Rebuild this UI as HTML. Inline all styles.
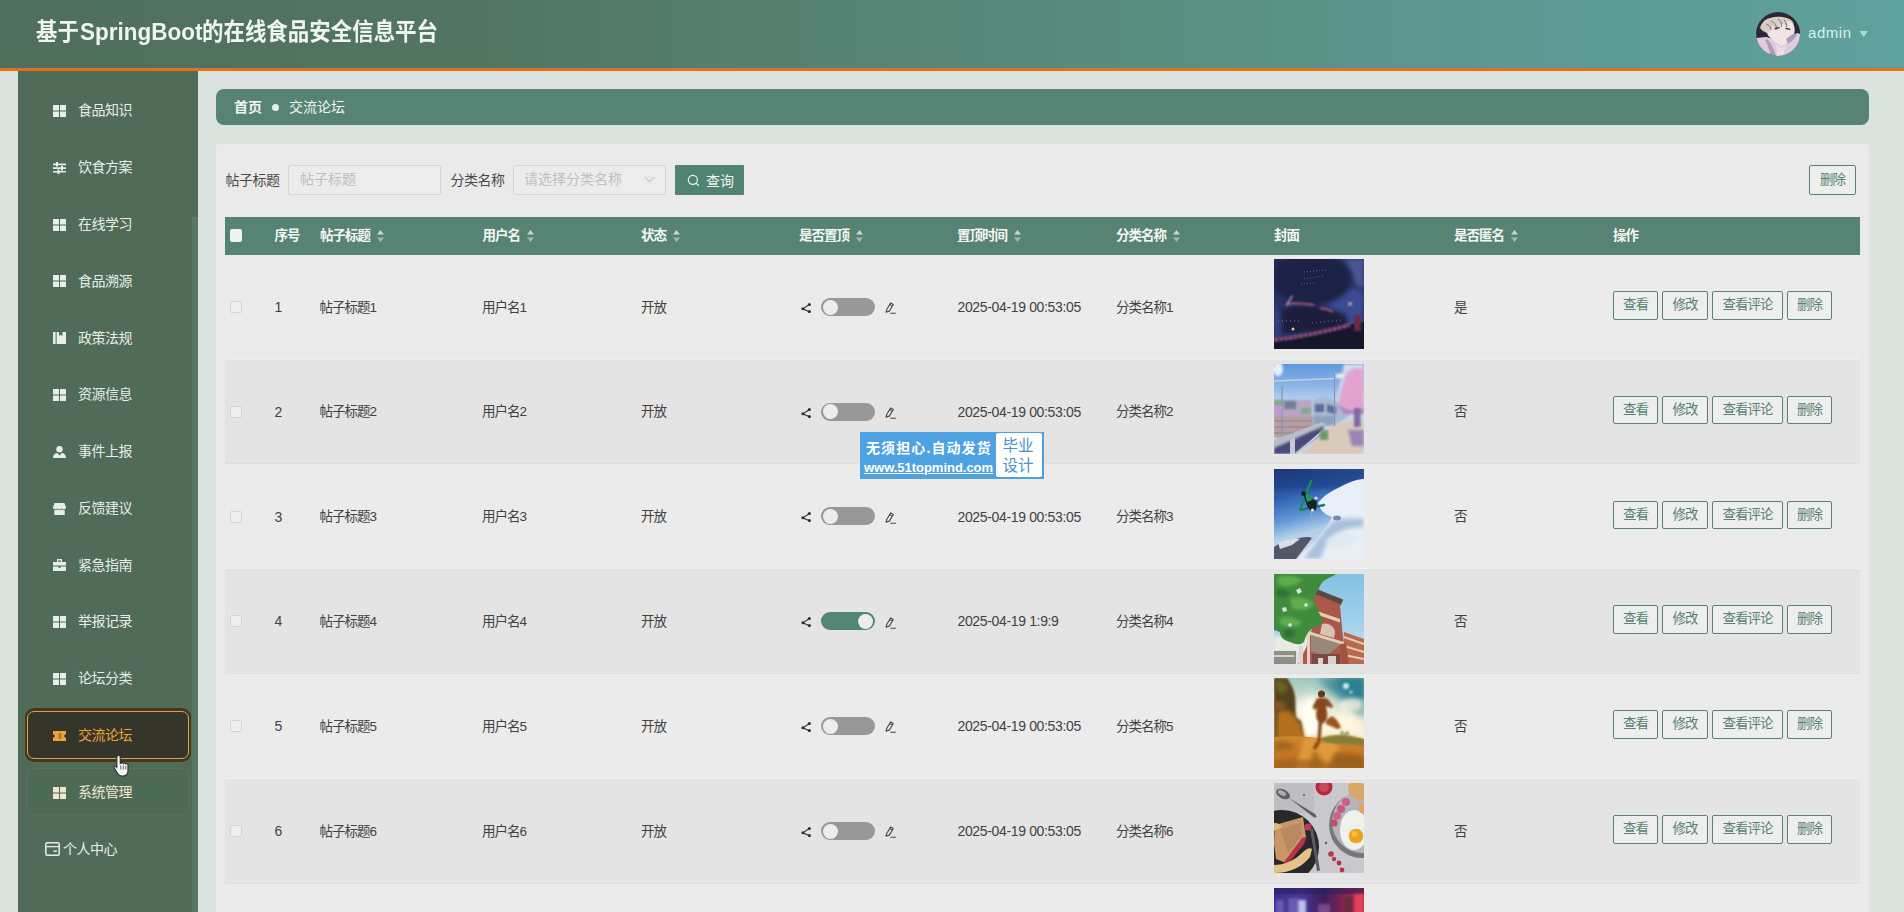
<!DOCTYPE html><html lang="zh-CN"><head><meta charset="utf-8"><title>基于SpringBoot的在线食品安全信息平台</title><style>
*{box-sizing:border-box;margin:0;padding:0}
html,body{width:1904px;height:912px;overflow:hidden}
body{position:relative;background:#dce3df;font-family:"Liberation Sans", "Noto Sans CJK SC", sans-serif;font-size:14px;color:#3c3c3c}
.abs{position:absolute}
#hdr{left:0;top:0;width:1904px;height:71px;background:linear-gradient(90deg,#4f6f5c 0%,#527563 25%,#588a7c 55%,#5d9c96 85%,#5fa19d 100%);border-bottom:3px solid #e2701c}
.tt{top:12px;height:40px;line-height:40px;font-size:24px;font-weight:bold;color:#f1f5f1;white-space:nowrap;transform-origin:0 50%}
#side{left:18px;top:71px;width:180px;height:841px;background:#506b58}
#thumb{left:191.5px;top:217px;width:6.5px;height:695px;background:#597966}
.mi{left:18px;width:180px;height:30px;line-height:30px;color:#e6efe6;font-size:14px;white-space:nowrap}
.mi svg{position:absolute;left:35px;top:9.800px;width:13px;height:12px}
.mi span{position:absolute;left:60px;top:0;letter-spacing:-.5px}
#act{left:24.5px;top:708px;width:166.5px;height:54px;border-radius:9px;background:#45371f}
#act i{position:absolute;left:2.5px;top:3px;right:2px;bottom:3px;border:1px solid #e0a03c;border-radius:7px;background:#35352b}
#hov{left:27px;top:768px;width:162px;height:47px;border-radius:7px;background:#4d6a57;border:1px solid #5b7256}
#bc{left:216px;top:89px;width:1653px;height:36px;border-radius:8px;background:#568373;color:#f2f6f3;line-height:36px;white-space:nowrap}
#panel{left:216px;top:144px;width:1653px;height:768px;background:#e9eae9;border-radius:2px 2px 0 0}
.lbl{top:165px;height:30px;line-height:30px;color:#4a4a4a;white-space:nowrap;letter-spacing:-.5px}
.inp{top:165.2px;height:29.5px;border:1px solid #d3d6d3;background:#ebeceb;border-radius:2px;line-height:27px;color:#bcc0c4;white-space:nowrap}
#qbtn{left:675px;top:165px;width:69px;height:30px;background:#518372;color:#f0f5f2;border-radius:1px;line-height:30px;white-space:nowrap}
#del{left:1809px;top:165px;width:47px;height:30px;border:1px solid #5d7f73;border-radius:2px;color:#5a8174;line-height:28px;text-align:center;font-size:13.5px;letter-spacing:-1px;background:#ecefed}
#th{left:225px;top:217px;width:1635px;height:38px;background:#568373}
.h{top:217px;height:38px;line-height:37px;color:#f3f7f4;font-weight:bold;font-size:13.5px;letter-spacing:-1px;white-space:nowrap}
.h svg{position:relative;top:2px;margin-left:7px;width:7px;height:12px}
.row{left:225px;width:1635px}
.t{height:20px;line-height:20px;white-space:nowrap;font-size:13.5px;letter-spacing:-1px;color:#424242;padding-top:.5px}
.n{height:20px;line-height:20px;white-space:nowrap;font-size:14px;letter-spacing:-.35px;color:#424242}
.cb{left:230.2px;width:12px;height:12px;border:1px solid #d3d4d3;border-radius:2px;background:#efefef}
.sw{left:821px;width:54px;height:18px;border-radius:9px;background:#989898}
.sw i{position:absolute;left:1.5px;top:1.900px;width:15px;height:15px;border-radius:50%;background:#ededed}
.sw.on{background:#558673}
.sw.on i{left:37px}
.b{height:28.5px;border:1px solid #5d8073;border-radius:2px;color:#5a8174;line-height:26px;text-align:center;font-size:13.5px;letter-spacing:-1px;background:#ecefed;white-space:nowrap}
.img{left:1274px;width:90px;height:90px;overflow:hidden}
.img svg{display:block;width:90px;height:90px}
</style></head><body>
<div id="hdr" class="abs"></div>
<div class="tt abs" style="left:36px;transform:scaleX(.892)">基于</div><div class="tt abs" style="left:79.5px;transform:scaleX(.937)">SpringBoot</div><div class="tt abs" style="left:202px;transform:scaleX(.894)">的在线食品安全信息平台</div>
<svg class="abs" style="left:1756px;top:11.700px;width:44.200px;height:44px" viewBox="0 0 44 44"><defs><clipPath id="av"><circle cx="22" cy="22" r="22"/></clipPath><filter id="avb"><feGaussianBlur stdDeviation=".55"/></filter></defs><g clip-path="url(#av)"><rect width="44" height="44" fill="#2b2733"/><g filter="url(#avb)"><path d="M0 26l10-1 8 2 8 6 10-9 5-3 3 1v22H0z" fill="#dfcbdd"/><path d="M11 12c3-5 9-6.500 15-6 6 .5 10.500 3 12 8 1 4 .5 8-1 12l-5 4-6 4-9-5.500-5-5c-2-4-2.500-8-1-11.500z" fill="#f0e4e4"/><path d="M4 16c1-5 5-9 10-10 6-2 12-1 17 0 3 1 6 3 7 6-3-2-6-3-9-2.500 2 1 3 3 3 5-3-2-6-3-9-2 1 2 0 4-2 5-1-2-3-3-5-2.500-1 3-3 5-5 6-3-1-6-3-7-5z" fill="#d9cbc6"/><path d="M15 9c4 2 6 5 5 9M22 7c3 2 4 5 3 8M10 12c3 1 5 3 5 6M28 8c2 2 3 4 2 7" stroke="#6c6170" stroke-width=".9" fill="none"/><path d="M19 16.500l4-.8M30 16.500l3.500.8" stroke="#4a4454" stroke-width="1.600" stroke-linecap="round"/><path d="M11 27c3 3 7 9 9 17h-6c0-6-3-12-5-16zM30 27l8-6 3 2c-3 4-6 7-9 9z" fill="#ab9cbc"/><path d="M20 33l6 3.500 4-3.500-3 11h-6z" fill="#f1dbe2"/><path d="M5 39c10 7 25 7 35-2l2 7H3z" fill="#e3f1ec"/></g></g></svg>
<div class="abs" style="left:1808px;top:22px;height:22px;line-height:22px;font-size:15px;letter-spacing:.55px;color:#d8f3ee;white-space:nowrap">admin</div>
<svg class="abs" style="left:1858.500px;top:30.500px;width:9.300px;height:6.200px" viewBox="0 0 11 8"><path d="M0 0H11L5.5 8Z" fill="#a9d9d3"/></svg>
<div id="side" class="abs"></div><div id="thumb" class="abs"></div>
<div id="act" class="abs"><i></i></div><div id="hov" class="abs"></div>
<div class="mi abs" style="top:95.4px;color:#e6efe6"><svg viewBox="0 0 13 12"><path d="M0 0h6v5.5H0zM7 0h6v5.5H7zM0 6.5h6V12H0zM7 6.5h6V12H7z" fill="#e6efe6"/></svg><span>食品知识</span></div>
<div class="mi abs" style="top:152.2px;color:#e6efe6"><svg viewBox="0 0 13 12"><path d="M0 1.6h13v1.6H0zM0 5.3h13v1.6H0zM0 9h13v1.6H0z" fill="#e6efe6"/><path d="M3 0h2v4.6H3zM8 3.8h2v4.6H8zM4.5 7.4h2V12h-2z" fill="#e6efe6"/></svg><span>饮食方案</span></div>
<div class="mi abs" style="top:209.0px;color:#e6efe6"><svg viewBox="0 0 13 12"><path d="M0 0h6v5.5H0zM7 0h6v5.5H7zM0 6.5h6V12H0zM7 6.5h6V12H7z" fill="#e6efe6"/></svg><span>在线学习</span></div>
<div class="mi abs" style="top:265.7px;color:#e6efe6"><svg viewBox="0 0 13 12"><path d="M0 0h6v5.5H0zM7 0h6v5.5H7zM0 6.5h6V12H0zM7 6.5h6V12H7z" fill="#e6efe6"/></svg><span>食品溯源</span></div>
<div class="mi abs" style="top:322.5px;color:#e6efe6"><svg viewBox="0 0 13 12"><path d="M0 0h2.6v12H0zM3.6 0H6v4l1.7-1.2L9.4 4V0H13v12H3.6z" fill="#e6efe6"/></svg><span>政策法规</span></div>
<div class="mi abs" style="top:379.3px;color:#e6efe6"><svg viewBox="0 0 13 12"><path d="M0 0h6v5.5H0zM7 0h6v5.5H7zM0 6.5h6V12H0zM7 6.5h6V12H7z" fill="#e6efe6"/></svg><span>资源信息</span></div>
<div class="mi abs" style="top:436.1px;color:#e6efe6"><svg viewBox="0 0 13 12"><circle cx="6.5" cy="3.2" r="3.2" fill="#e6efe6"/><path d="M0 12c0-3.4 2.3-5 4.2-5l2.3 2.4L8.8 7c1.9 0 4.2 1.6 4.2 5z" fill="#e6efe6"/></svg><span>事件上报</span></div>
<div class="mi abs" style="top:492.9px;color:#e6efe6"><svg viewBox="0 0 13 12"><path d="M1.6 0h9.8L13 4.2c0 1.5-1.1 2.2-2.2 2.2S8.7 5.700 8.700 5c0 .7-1 1.400-2.200 1.400S4.300 5.700 4.300 5c0 .7-1 1.400-2.100 1.400S0 5.700 0 4.200z" fill="#e6efe6"/><path d="M1.300 7.300c1 .2 2.100 0 3-.7 1.300 1 3.100 1 4.400 0 .9.700 2 .9 3 .7V12H1.300z" fill="#e6efe6"/></svg><span>反馈建议</span></div>
<div class="mi abs" style="top:549.6px;color:#e6efe6"><svg viewBox="0 0 13 12"><path d="M4 0h5v3h-1.400V1.300H5.400V3H4z" fill="#e6efe6"/><path d="M0 3h13v3.600H0zM0 7.600h5.300v1.200h2.400V7.600H13V12H0z" fill="#e6efe6"/></svg><span>紧急指南</span></div>
<div class="mi abs" style="top:606.4px;color:#e6efe6"><svg viewBox="0 0 13 12"><path d="M0 0h6v5.5H0zM7 0h6v5.5H7zM0 6.5h6V12H0zM7 6.5h6V12H7z" fill="#e6efe6"/></svg><span>举报记录</span></div>
<div class="mi abs" style="top:663.2px;color:#e6efe6"><svg viewBox="0 0 13 12"><path d="M0 0h6v5.5H0zM7 0h6v5.5H7zM0 6.5h6V12H0zM7 6.5h6V12H7z" fill="#e6efe6"/></svg><span>论坛分类</span></div>
<div class="mi abs" style="top:720.0px;color:#e9a43a"><svg viewBox="0 0 13 12"><path d="M0 1h13v3.200a1.800 1.800 0 0 0 0 3.600V11H0V7.800a1.800 1.800 0 0 0 0-3.600z" fill="#e9a43a"/><path d="M6 3v6M7.600 3v6" stroke="#8a5a1c" stroke-width=".8"/></svg><span>交流论坛</span></div>
<div class="mi abs" style="top:776.8px;color:#f2e6d2"><svg viewBox="0 0 13 12"><path d="M0 0h6v5.5H0zM7 0h6v5.5H7zM0 6.5h6V12H0zM7 6.5h6V12H7z" fill="#f2e6d2"/></svg><span>系统管理</span></div>
<div class="mi abs" style="top:833.5px"><svg style="left:27px;top:8px;width:15px;height:14px" viewBox="0 0 15 14"><rect x=".8" y=".8" width="13.400" height="12.400" rx="1.500" fill="none" stroke="#e6efe8" stroke-width="1.500"/><path d="M1 4.600h13M8.500 9.300h3.500" stroke="#e6efe8" stroke-width="1.400"/></svg><span style="left:45px">个人中心</span></div>
<svg class="abs" style="left:112px;top:754px;width:20px;height:24px" viewBox="0 0 20 24"><path d="M6.500 1.500c1.200 0 1.800.8 1.800 1.800v6.200l.6-.1c.4-1 2.200-.9 2.500.1.500-.8 2.200-.6 2.400.4.700-.6 2.200-.2 2.200 1v5.600c0 3.600-2 5.700-5.400 5.700-2.700 0-4-.9-5.400-3.200L2.300 14c-.6-1.100.6-2.200 1.700-1.400l.8.800V3.300c0-1 .6-1.800 1.700-1.800z" fill="#f4f6f5" stroke="#333" stroke-width="1.200"/><path d="M8.800 11.500v4M11.300 11.500v4M13.800 12v3.500" stroke="#555" stroke-width=".9"/></svg>
<div id="bc" class="abs"><span class="abs" style="left:18px;top:0;font-weight:bold">首页</span><i class="abs" style="left:56px;top:14.500px;width:7px;height:7px;border-radius:50%;background:#e9efeb"></i><span class="abs" style="left:73px;top:0">交流论坛</span></div>
<div id="panel" class="abs"></div>
<div class="lbl abs" style="left:225.5px">帖子标题</div>
<div class="inp abs" style="left:288px;width:152.500px;padding-left:11px">帖子标题</div>
<div class="lbl abs" style="left:450.500px">分类名称</div>
<div class="inp abs" style="left:513px;width:153px;padding-left:10px">请选择分类名称<svg class="abs" style="left:130px;top:10px;width:11px;height:7px" viewBox="0 0 11 7"><path d="M.7.800l4.800 4.800L10.300.8" fill="none" stroke="#c3c7cb" stroke-width="1.200"/></svg></div>
<div id="qbtn" class="abs"><svg class="abs" style="left:11.500px;top:8.500px;width:13px;height:13px" viewBox="0 0 14 14"><circle cx="6.300" cy="6.300" r="4.900" fill="none" stroke="#f0f5f2" stroke-width="1.300"/><path d="M9.900 9.900l2.800 2.800" stroke="#f0f5f2" stroke-width="1.300"/></svg><span class="abs" style="left:31px;top:.7px">查询</span></div>
<div id="del" class="abs">删除</div>
<div id="th" class="abs"></div>
<div class="abs" style="left:230px;top:229px;width:12px;height:12.500px;border-radius:2px;background:#f0f2f1"></div>
<div class="h abs" style="left:274.5px">序号</div>
<div class="h abs" style="left:320px">帖子标题<svg viewBox="0 0 7 12"><path d="M3.500 0L7 4.500H0z" fill="#cdd7d2"/><path d="M3.500 12L7 7.500H0z" fill="#a3b8ae"/></svg></div>
<div class="h abs" style="left:482.5px">用户名<svg viewBox="0 0 7 12"><path d="M3.500 0L7 4.500H0z" fill="#cdd7d2"/><path d="M3.500 12L7 7.500H0z" fill="#a3b8ae"/></svg></div>
<div class="h abs" style="left:641px">状态<svg viewBox="0 0 7 12"><path d="M3.500 0L7 4.500H0z" fill="#cdd7d2"/><path d="M3.500 12L7 7.500H0z" fill="#a3b8ae"/></svg></div>
<div class="h abs" style="left:799px">是否置顶<svg viewBox="0 0 7 12"><path d="M3.500 0L7 4.500H0z" fill="#cdd7d2"/><path d="M3.500 12L7 7.500H0z" fill="#a3b8ae"/></svg></div>
<div class="h abs" style="left:957px">置顶时间<svg viewBox="0 0 7 12"><path d="M3.500 0L7 4.500H0z" fill="#cdd7d2"/><path d="M3.500 12L7 7.500H0z" fill="#a3b8ae"/></svg></div>
<div class="h abs" style="left:1116px">分类名称<svg viewBox="0 0 7 12"><path d="M3.500 0L7 4.500H0z" fill="#cdd7d2"/><path d="M3.500 12L7 7.500H0z" fill="#a3b8ae"/></svg></div>
<div class="h abs" style="left:1274px">封面</div>
<div class="h abs" style="left:1454px">是否匿名<svg viewBox="0 0 7 12"><path d="M3.500 0L7 4.500H0z" fill="#cdd7d2"/><path d="M3.500 12L7 7.500H0z" fill="#a3b8ae"/></svg></div>
<div class="h abs" style="left:1613px">操作</div>
<div class="row abs" style="top:254.75px;height:104.80px;background:#ebebeb;border-bottom:1px solid #efefec"></div>
<div class="img abs" style="top:259.25px"><svg viewBox="0 0 90 90"><defs><linearGradient id="g1" x1="0" y1="0" x2="1" y2="1"><stop offset="0" stop-color="#232a52"/><stop offset=".55" stop-color="#2c3a78"/><stop offset="1" stop-color="#1a2046"/></linearGradient><filter id="b1a" x="-20%" y="-20%" width="140%" height="140%"><feGaussianBlur stdDeviation="2.200"/></filter><filter id="b1b" x="-20%" y="-20%" width="140%" height="140%"><feGaussianBlur stdDeviation="1"/></filter></defs><rect width="90" height="90" fill="url(#g1)"/><path d="M70 0h20v28c-6 2-10-4-12-12z" fill="#4b5590" filter="url(#b1a)"/><path d="M52 30c12-4 28-2 38 4v36H60z" fill="#3a4c92" filter="url(#b1a)"/><path d="M0 40c4 8 8 22 10 34L0 78z" fill="#323f80" filter="url(#b1a)"/><ellipse cx="38" cy="20" rx="40" ry="26" fill="#1e2345" filter="url(#b1a)"/><path d="M8 50c20-6 44-4 64 6l2 12c-22 4-46 8-66 6z" fill="#1a1d3c" filter="url(#b1a)"/><path d="M12 45.500c8-1.500 18-1.500 28 .5M46 49c6 .5 10 2 13 4" stroke="#b65a78" stroke-width="1.800" fill="none" filter="url(#b1b)"/><path d="M13 46l5.500-9.500" stroke="#d9a4b6" stroke-width="1.400" filter="url(#b1b)"/><path d="M30 13l22-2M30 20l20-3M27 25l14-1" stroke="#5d5f8c" stroke-width="1" stroke-dasharray="1 2" /><path d="M0 90V80c26-3 52-9 78-15l12-2v27z" fill="#14162c"/><path d="M0 81c26-3 50-8 76-15" stroke="#a2527c" stroke-width="3.500" fill="none" stroke-dasharray="4 1" filter="url(#b1b)"/><path d="M4 62h24M38 64l30-3" stroke="#5a5a92" stroke-width="1.500" stroke-dasharray="1 3"/><path d="M80 56h7v16h-7z" fill="#6e2a44" filter="url(#b1b)"/><circle cx="76" cy="45" r="2" fill="#c9a0a6" filter="url(#b1b)"/><circle cx="19" cy="70" r="1.500" fill="#e0c890"/></svg></div>
<div class="cb abs" style="top:301.0px"></div>
<div class="n abs" style="left:274.500px;top:297.0px">1</div>
<div class="t abs" style="left:319.500px;top:297.0px">帖子标题1</div>
<div class="t abs" style="left:482px;top:297.0px">用户名1</div>
<div class="t abs" style="left:641px;top:297.0px">开放</div>
<svg class="abs" style="left:800.500px;top:302.8px;width:11px;height:10px" viewBox="0 0 11 10"><path d="M8.400 1.500L1.800 5.800l6.600 2.900" fill="none" stroke="#333" stroke-width="1.100"/><circle cx="8.400" cy="1.600" r="1.500" fill="#2e2e2e"/><circle cx="1.900" cy="5.800" r="1.500" fill="#2e2e2e"/><circle cx="8.400" cy="8.600" r="1.500" fill="#2e2e2e"/></svg>
<div class="sw abs" style="top:297.7px"><i></i></div>
<svg class="abs" style="left:885px;top:302.2px;width:12px;height:12px" viewBox="0 0 12 12"><path d="M1 10.100L1.700 7.500 5.700.9 8.300 2.500 4.300 9.100z" fill="none" stroke="#4a4a4a" stroke-width="1.100" stroke-linejoin="round"/><path d="M4.800 2.500l2.600 1.600M5.300 11.200h5.600" stroke="#4a4a4a" stroke-width="1.100"/></svg>
<div class="n abs" style="left:957.500px;top:297.0px">2025-04-19 00:53:05</div>
<div class="t abs" style="left:1116px;top:297.0px">分类名称1</div>
<div class="t abs" style="left:1454px;top:297.0px">是</div>
<div class="b abs" style="left:1613px;top:291.0px;width:45px">查看</div>
<div class="b abs" style="left:1662px;top:291.0px;width:46px">修改</div>
<div class="b abs" style="left:1712px;top:291.0px;width:71px">查看评论</div>
<div class="b abs" style="left:1787px;top:291.0px;width:45px">删除</div>
<div class="row abs" style="top:359.55px;height:104.80px;background:#e4e4e4;border-bottom:1px solid #dedede"></div>
<div class="img abs" style="top:364.05px"><svg viewBox="0 0 90 90"><defs><linearGradient id="g2" x1="0" y1="0" x2="0" y2="1"><stop offset="0" stop-color="#5f97de"/><stop offset=".25" stop-color="#8db7e8"/><stop offset=".45" stop-color="#c3d6ee"/><stop offset="1" stop-color="#d6dbe6"/></linearGradient><filter id="b2a" x="-20%" y="-20%" width="140%" height="140%"><feGaussianBlur stdDeviation="1.800"/></filter><filter id="b2b" x="-20%" y="-20%" width="140%" height="140%"><feGaussianBlur stdDeviation=".8"/></filter></defs><rect width="90" height="90" fill="url(#g2)"/><path d="M70 0h20v40H62z" fill="#d4def0" filter="url(#b2a)"/><ellipse cx="4" cy="5" rx="5" ry="7" fill="#e8f0fa" filter="url(#b2b)"/><ellipse cx="66" cy="12" rx="5" ry="2.500" fill="#e3ecf8" filter="url(#b2b)"/><path d="M0 36h38v18H0z" fill="#b7a7c4" filter="url(#b2b)"/><path d="M10 37h12v8H10z" fill="#6f7f96" filter="url(#b2b)"/><path d="M0 36h10v6H0zM27 44h10v6H27z" fill="#84a88c" filter="url(#b2b)"/><path d="M0 42h9v12H0z" fill="#c49ad0" filter="url(#b2b)"/><path d="M0 52h40v22H0z" fill="#b49ea4" filter="url(#b2b)"/><path d="M0 57h38M0 63h36M0 69h30" stroke="#8f7f8c" stroke-width="1.200"/><path d="M38 40c1-6 8-8 16-7l22 12v6L60 62H40z" fill="#a9b9d4" filter="url(#b2b)"/><path d="M41 40h9v8h-9zM53 40l9 3v7l-9-2z" fill="#5b6c98" filter="url(#b2b)"/><path d="M40 52h20v9H40z" fill="#8fa0c0" filter="url(#b2b)"/><path d="M28 90L60 60l26-4 4 2v32z" fill="#d9cabb" filter="url(#b2b)"/><path d="M74 66h16v16H78z" fill="#9a86b4" filter="url(#b2a)"/><path d="M64 40c2-10 4-20 8-30 4-6 12-8 18-4v40c-8 4-18 2-26-6z" fill="#e2a4cf" filter="url(#b2a)"/><path d="M64 40c6 6 18 8 26 4v6H70z" fill="#b285be" filter="url(#b2b)"/><path d="M80 44h6.500v19H80z" fill="#8467a2" filter="url(#b2b)"/><path d="M0 76L48 58l4 3L0 84z" fill="#b9bcca"/><path d="M0 84L50 62l-2 8-28 20H0z" fill="#474b7c" filter="url(#b2b)"/><path d="M17 76l3-1v15h-3zM22 90l28-24" stroke="#c9c9d4" stroke-width="2" fill="#c9c9d4"/><path d="M46 66h8v10h-8z" fill="#6f9a62" filter="url(#b2b)"/><path d="M60.500 10v52M8 22v50" stroke="#8d93ac" stroke-width="1.200"/><path d="M0 17l60-2.500" stroke="#c6cdd8" stroke-width="1.600"/></svg></div>
<div class="cb abs" style="top:405.8px"></div>
<div class="n abs" style="left:274.500px;top:401.8px">2</div>
<div class="t abs" style="left:319.500px;top:401.8px">帖子标题2</div>
<div class="t abs" style="left:482px;top:401.8px">用户名2</div>
<div class="t abs" style="left:641px;top:401.8px">开放</div>
<svg class="abs" style="left:800.500px;top:407.6px;width:11px;height:10px" viewBox="0 0 11 10"><path d="M8.400 1.500L1.800 5.800l6.600 2.900" fill="none" stroke="#333" stroke-width="1.100"/><circle cx="8.400" cy="1.600" r="1.500" fill="#2e2e2e"/><circle cx="1.900" cy="5.800" r="1.500" fill="#2e2e2e"/><circle cx="8.400" cy="8.600" r="1.500" fill="#2e2e2e"/></svg>
<div class="sw abs" style="top:402.5px"><i></i></div>
<svg class="abs" style="left:885px;top:407.0px;width:12px;height:12px" viewBox="0 0 12 12"><path d="M1 10.100L1.700 7.500 5.700.9 8.300 2.500 4.300 9.100z" fill="none" stroke="#4a4a4a" stroke-width="1.100" stroke-linejoin="round"/><path d="M4.800 2.500l2.600 1.600M5.300 11.200h5.600" stroke="#4a4a4a" stroke-width="1.100"/></svg>
<div class="n abs" style="left:957.500px;top:401.8px">2025-04-19 00:53:05</div>
<div class="t abs" style="left:1116px;top:401.8px">分类名称2</div>
<div class="t abs" style="left:1454px;top:401.8px">否</div>
<div class="b abs" style="left:1613px;top:395.8px;width:45px">查看</div>
<div class="b abs" style="left:1662px;top:395.8px;width:46px">修改</div>
<div class="b abs" style="left:1712px;top:395.8px;width:71px">查看评论</div>
<div class="b abs" style="left:1787px;top:395.8px;width:45px">删除</div>
<div class="row abs" style="top:464.35px;height:104.80px;background:#ebebeb;border-bottom:1px solid #efefec"></div>
<div class="img abs" style="top:468.85px"><svg viewBox="0 0 90 90"><defs><linearGradient id="g3" x1="0" y1="0" x2=".25" y2="1"><stop offset="0" stop-color="#1b3674"/><stop offset=".3" stop-color="#2c5cab"/><stop offset=".55" stop-color="#5b93d4"/><stop offset=".75" stop-color="#b3cfea"/><stop offset="1" stop-color="#c9dcef"/></linearGradient><filter id="b3a" x="-20%" y="-20%" width="140%" height="140%"><feGaussianBlur stdDeviation="2"/></filter><filter id="b3b" x="-20%" y="-20%" width="140%" height="140%"><feGaussianBlur stdDeviation=".7"/></filter></defs><rect width="90" height="90" fill="url(#g3)"/><path d="M0 0h90v20H0z" fill="#1d3b7e" opacity=".55" filter="url(#b3a)"/><path d="M44 34c6-8 14-12 22-16 8-4 16-8 24-8v80H24c6-8 14-14 20-22 6-8 12-14 14-20-6-2-12-6-14-14z" fill="#e9eff6" filter="url(#b3b)"/><path d="M58 52c8-2 20-4 32-2v8c-10 0-22 2-30 8-6 6-10 14-14 24H30c8-12 18-26 28-38z" fill="#a9c1de" filter="url(#b3a)"/><path d="M52 70c12-4 24-6 32-4-2 10-14 14-30 12z" fill="#dfe8f2" filter="url(#b3a)"/><ellipse cx="63" cy="49" rx="4" ry="2.500" fill="#7d8aa4" filter="url(#b3b)"/><path d="M0 78c6-4 14-8 22-8 6-2 12-3 16-1L22 90H0z" fill="#535968" filter="url(#b3b)"/><path d="M4 74c6-3 14-5 22-4l-8 6-12 4z" fill="#d6dde8" filter="url(#b3b)"/><path d="M26 41L37 12M27 41l23-5" stroke="#168a66" stroke-width="2.400" stroke-linecap="round"/><path d="M29 40l20-3.500" stroke="#35518c" stroke-width="1.200"/><path d="M29 24l6 1 3 5 5 2-1 9-5 1-4-5z" fill="#16241f"/><path d="M31 24l6 2 1 5-5 2z" fill="#1f9a66"/><circle cx="29.500" cy="24.500" r="2.300" fill="#101820"/><path d="M38.500 40l-2 11" stroke="#8fa6c0" stroke-width="1.300"/><circle cx="42" cy="29" r="1.600" fill="#e8e2d8"/><circle cx="38.500" cy="41" r="1.500" fill="#e8efe8"/></svg></div>
<div class="cb abs" style="top:510.6px"></div>
<div class="n abs" style="left:274.500px;top:506.6px">3</div>
<div class="t abs" style="left:319.500px;top:506.6px">帖子标题3</div>
<div class="t abs" style="left:482px;top:506.6px">用户名3</div>
<div class="t abs" style="left:641px;top:506.6px">开放</div>
<svg class="abs" style="left:800.500px;top:512.4px;width:11px;height:10px" viewBox="0 0 11 10"><path d="M8.400 1.500L1.800 5.800l6.600 2.900" fill="none" stroke="#333" stroke-width="1.100"/><circle cx="8.400" cy="1.600" r="1.500" fill="#2e2e2e"/><circle cx="1.900" cy="5.800" r="1.500" fill="#2e2e2e"/><circle cx="8.400" cy="8.600" r="1.500" fill="#2e2e2e"/></svg>
<div class="sw abs" style="top:507.3px"><i></i></div>
<svg class="abs" style="left:885px;top:511.8px;width:12px;height:12px" viewBox="0 0 12 12"><path d="M1 10.100L1.700 7.500 5.700.9 8.300 2.500 4.300 9.100z" fill="none" stroke="#4a4a4a" stroke-width="1.100" stroke-linejoin="round"/><path d="M4.800 2.500l2.600 1.600M5.300 11.200h5.600" stroke="#4a4a4a" stroke-width="1.100"/></svg>
<div class="n abs" style="left:957.500px;top:506.6px">2025-04-19 00:53:05</div>
<div class="t abs" style="left:1116px;top:506.6px">分类名称3</div>
<div class="t abs" style="left:1454px;top:506.6px">否</div>
<div class="b abs" style="left:1613px;top:500.6px;width:45px">查看</div>
<div class="b abs" style="left:1662px;top:500.6px;width:46px">修改</div>
<div class="b abs" style="left:1712px;top:500.6px;width:71px">查看评论</div>
<div class="b abs" style="left:1787px;top:500.6px;width:45px">删除</div>
<div class="row abs" style="top:569.15px;height:104.80px;background:#e4e4e4;border-bottom:1px solid #dedede"></div>
<div class="img abs" style="top:573.65px"><svg viewBox="0 0 90 90"><defs><linearGradient id="g4" x1="0" y1="0" x2="0" y2="1"><stop offset="0" stop-color="#83c2e4"/><stop offset=".6" stop-color="#a5d3ea"/><stop offset="1" stop-color="#dfe9e8"/></linearGradient><filter id="b4a" x="-20%" y="-20%" width="140%" height="140%"><feGaussianBlur stdDeviation="1.500"/></filter><filter id="b4b" x="-20%" y="-20%" width="140%" height="140%"><feGaussianBlur stdDeviation=".7"/></filter></defs><rect width="90" height="90" fill="url(#g4)"/><path d="M0 62h34v16H0z" fill="#e9ebe4" filter="url(#b4a)"/><path d="M0 77h22v13H0z" fill="#8b9188" filter="url(#b4b)"/><path d="M0 82h20" stroke="#d9d3c4" stroke-width="2"/><path d="M70 58l20 7v25H68z" fill="#b9694f" filter="url(#b4b)"/><path d="M70 63l20 7M70 72l20 6M70 81l20 4" stroke="#e3cdb6" stroke-width="2"/><path d="M35 13l34 13-3 6 3 32 3 26H24l8-16 4-14 6-14z" fill="#a9594a" filter="url(#b4b)"/><path d="M35 12l34 13.500-2 5L34 17z" fill="#5d4844"/><path d="M37 35l29 10v3.500L37 38.500zM34 57l36 11v3.500L34 60.500z" fill="#e6cdb6"/><path d="M48 50c6-2 12 2 13 8l-1 6-14-4z" fill="#d8c3b2" filter="url(#b4b)"/><path d="M37 61l30 9-16 13-14-6z" fill="#96897a" filter="url(#b4b)"/><path d="M33 58h3v32h-3zM25 72h4v18h-4z" fill="#e1d4c6"/><path d="M66 70l6-.5 3 20.500h-7z" fill="#a4503f"/><path d="M38 80h28v10H38z" fill="#7b4a40" filter="url(#b4b)"/><path d="M44 84h5v6h-5zM54 82h8v8h-8z" fill="#d9d2cc"/><path d="M0 0h62c-6 4-14 6-16 12-2 6-6 8-6 14 2 6 4 12 8 18 2 4-2 8-8 10-6 2-8 8-10 14-4 4-10 2-14 0-6-2-10-4-10-10L0 56z" fill="#418c3e" filter="url(#b4b)"/><path d="M4 4c8-4 18-2 24 2-6 6-16 8-24 4zM16 24c8-2 18 0 24 6-4 6-14 8-22 4zM6 44c8-2 16 0 22 4-4 6-16 6-22 2z" fill="#5fae4c" filter="url(#b4a)"/><path d="M2 16c6-2 12 0 14 4-4 4-10 4-14 2zM10 56c4-2 10 0 12 4-2 4-8 6-12 2z" fill="#2e6f38" filter="url(#b4a)"/><path d="M22 16l4-2 2 4-4 2zM8 34l4-1 1 4-4 1zM14 50l3-1 1 3-3 1zM30 30l3-1 1 3-3 1z" fill="#cfe6d8"/></svg></div>
<div class="cb abs" style="top:615.4px"></div>
<div class="n abs" style="left:274.500px;top:611.4px">4</div>
<div class="t abs" style="left:319.500px;top:611.4px">帖子标题4</div>
<div class="t abs" style="left:482px;top:611.4px">用户名4</div>
<div class="t abs" style="left:641px;top:611.4px">开放</div>
<svg class="abs" style="left:800.500px;top:617.2px;width:11px;height:10px" viewBox="0 0 11 10"><path d="M8.400 1.500L1.800 5.800l6.600 2.900" fill="none" stroke="#333" stroke-width="1.100"/><circle cx="8.400" cy="1.600" r="1.500" fill="#2e2e2e"/><circle cx="1.900" cy="5.800" r="1.500" fill="#2e2e2e"/><circle cx="8.400" cy="8.600" r="1.500" fill="#2e2e2e"/></svg>
<div class="sw abs on" style="top:612.1px"><i></i></div>
<svg class="abs" style="left:885px;top:616.6px;width:12px;height:12px" viewBox="0 0 12 12"><path d="M1 10.100L1.700 7.500 5.700.9 8.300 2.500 4.300 9.100z" fill="none" stroke="#4a4a4a" stroke-width="1.100" stroke-linejoin="round"/><path d="M4.800 2.500l2.600 1.600M5.300 11.200h5.600" stroke="#4a4a4a" stroke-width="1.100"/></svg>
<div class="n abs" style="left:957.500px;top:611.4px">2025-04-19 1:9:9</div>
<div class="t abs" style="left:1116px;top:611.4px">分类名称4</div>
<div class="t abs" style="left:1454px;top:611.4px">否</div>
<div class="b abs" style="left:1613px;top:605.4px;width:45px">查看</div>
<div class="b abs" style="left:1662px;top:605.4px;width:46px">修改</div>
<div class="b abs" style="left:1712px;top:605.4px;width:71px">查看评论</div>
<div class="b abs" style="left:1787px;top:605.4px;width:45px">删除</div>
<div class="row abs" style="top:673.95px;height:104.80px;background:#ebebeb;border-bottom:1px solid #efefec"></div>
<div class="img abs" style="top:678.45px"><svg viewBox="0 0 90 90"><defs><linearGradient id="g5" x1="0" y1="0" x2="0" y2="1"><stop offset="0" stop-color="#9fc6c0"/><stop offset=".3" stop-color="#dfe6d2"/><stop offset=".66" stop-color="#fbf2d4"/><stop offset="1" stop-color="#f3d9a0"/></linearGradient><linearGradient id="h5" x1="0" y1="0" x2="0" y2="1"><stop offset="0" stop-color="#c98a30"/><stop offset=".35" stop-color="#cc7e2a"/><stop offset="1" stop-color="#b0661e"/></linearGradient><filter id="b5a" x="-20%" y="-20%" width="140%" height="140%"><feGaussianBlur stdDeviation="2"/></filter><filter id="b5b" x="-20%" y="-20%" width="140%" height="140%"><feGaussianBlur stdDeviation=".8"/></filter><filter id="b5c" x="-20%" y="-20%" width="140%" height="140%"><feGaussianBlur stdDeviation="4.500"/></filter></defs><rect width="90" height="90" fill="url(#g5)"/><path d="M44 0h46v40c-8-4-14-10-20-16-8-6-18-14-26-24z" fill="#3c8a98" filter="url(#b5c)"/><path d="M60 0h30v22c-10-2-20-8-30-22z" fill="#2f7f90" filter="url(#b5a)"/><ellipse cx="37" cy="44" rx="16" ry="26" fill="#fffef4" filter="url(#b5c)"/><ellipse cx="70" cy="46" rx="18" ry="11" fill="#fdf6e0" filter="url(#b5c)"/><path d="M64 26c6-6 14-8 24-4v10l-20 4z" fill="#eef0e4" opacity=".85" filter="url(#b5a)"/><circle cx="72" cy="8" r="3" fill="#d4eaea" filter="url(#b5b)"/><circle cx="77" cy="14" r="1.500" fill="#cfe6e6" filter="url(#b5b)"/><path d="M0 0h13c3 5 7 10 8 18 1 8 0 14 1 22l5 3 3 18H0z" fill="#55431c" filter="url(#b5b)"/><path d="M3 34c6-4 14-2 18 4l6 8 4 16H2z" fill="#b4701f" filter="url(#b5a)"/><path d="M2 3c4-2 10 0 12 6-2 6-8 8-12 4z" fill="#6b6428" filter="url(#b5a)"/><path d="M0 24c4-2 10 0 12 4-2 4-8 6-12 4z" fill="#8a5a22" filter="url(#b5a)"/><path d="M0 59c14-1 30-1 44 1 16-1 32-1 46 1v29H0z" fill="url(#h5)"/><path d="M30 60c8-2 18-2 26 0l10 10-14 20H22z" fill="#e6a440" opacity=".75" filter="url(#b5a)"/><path d="M48 60c10-4 22-4 30-2l12 3v7c-14-2-30-2-42-4z" fill="#857f36" filter="url(#b5b)"/><path d="M66 56l2-4 2 4 4-3 1 4z" fill="#7f7a36" filter="url(#b5b)"/><path d="M0 64c8-2 18 0 22 4-6 5-16 5-22 3zM40 72c6 6 10 12 10 18H34zM60 76c10-2 20 0 30 4v10H56z" fill="#8f5a1c" opacity=".7" filter="url(#b5a)"/><path d="M0 84c20-4 40-2 60 2l30 2v2H0z" fill="#a8641c" opacity=".8" filter="url(#b5a)"/><circle cx="47.500" cy="16" r="3.500" fill="#5d3a1e"/><path d="M42.500 21c4-2 9-2 12 1l4.500 6-1 2-6-2 1 6c1 4 0 8-2 10l-3 2-1.500 18-4.500 8-3.500-2 5-8 1-18c-3-4-3-10-1-14l-3 2-2-3z" fill="#86461a" filter="url(#b5b)"/><path d="M52 42l6-4c4 2 8 8 9 12l-4 1c-4-2-8-4-11-5z" fill="#9c521c" filter="url(#b5b)"/></svg></div>
<div class="cb abs" style="top:720.2px"></div>
<div class="n abs" style="left:274.500px;top:716.2px">5</div>
<div class="t abs" style="left:319.500px;top:716.2px">帖子标题5</div>
<div class="t abs" style="left:482px;top:716.2px">用户名5</div>
<div class="t abs" style="left:641px;top:716.2px">开放</div>
<svg class="abs" style="left:800.500px;top:722.0px;width:11px;height:10px" viewBox="0 0 11 10"><path d="M8.400 1.500L1.800 5.800l6.600 2.900" fill="none" stroke="#333" stroke-width="1.100"/><circle cx="8.400" cy="1.600" r="1.500" fill="#2e2e2e"/><circle cx="1.900" cy="5.800" r="1.500" fill="#2e2e2e"/><circle cx="8.400" cy="8.600" r="1.500" fill="#2e2e2e"/></svg>
<div class="sw abs" style="top:716.9px"><i></i></div>
<svg class="abs" style="left:885px;top:721.4px;width:12px;height:12px" viewBox="0 0 12 12"><path d="M1 10.100L1.700 7.500 5.700.9 8.300 2.500 4.300 9.100z" fill="none" stroke="#4a4a4a" stroke-width="1.100" stroke-linejoin="round"/><path d="M4.800 2.500l2.600 1.600M5.300 11.200h5.600" stroke="#4a4a4a" stroke-width="1.100"/></svg>
<div class="n abs" style="left:957.500px;top:716.2px">2025-04-19 00:53:05</div>
<div class="t abs" style="left:1116px;top:716.2px">分类名称5</div>
<div class="t abs" style="left:1454px;top:716.2px">否</div>
<div class="b abs" style="left:1613px;top:710.2px;width:45px">查看</div>
<div class="b abs" style="left:1662px;top:710.2px;width:46px">修改</div>
<div class="b abs" style="left:1712px;top:710.2px;width:71px">查看评论</div>
<div class="b abs" style="left:1787px;top:710.2px;width:45px">删除</div>
<div class="row abs" style="top:778.75px;height:104.80px;background:#e4e4e4;border-bottom:1px solid #dedede"></div>
<div class="img abs" style="top:783.25px"><svg viewBox="0 0 90 90"><defs><filter id="b6a" x="-20%" y="-20%" width="140%" height="140%"><feGaussianBlur stdDeviation="1.200"/></filter><filter id="b6b" x="-20%" y="-20%" width="140%" height="140%"><feGaussianBlur stdDeviation=".6"/></filter></defs><rect width="90" height="90" fill="#c9c9cd"/><path d="M0 0h40v30H0z" fill="#bdbdc3" filter="url(#b6a)"/><circle cx="88" cy="42" r="33" fill="#77787c" filter="url(#b6b)"/><circle cx="89" cy="39" r="31" fill="#b4b5ba"/><ellipse cx="80" cy="47" rx="14" ry="20" fill="#f1f1ec" filter="url(#b6b)"/><circle cx="82" cy="53" r="7.300" fill="#f0a11f"/><circle cx="80.500" cy="51" r="3" fill="#f6bc4a"/><path d="M74 2c4-3 10-3 16-1v16c-6 0-12-2-15-6z" fill="#d7a868" filter="url(#b6b)"/><path d="M84 20h6v10h-4z" fill="#e0a468"/><circle cx="72" cy="19" r="4" fill="#cf5e86"/><circle cx="67" cy="26" r="4" fill="#c95a7e"/><circle cx="63" cy="33" r="4" fill="#cc6488"/><circle cx="60" cy="40" r="3.600" fill="#b9506f"/><circle cx="50" cy="4" r="8.500" fill="#b32a3c" filter="url(#b6b)"/><circle cx="50" cy="4" r="5" fill="#c9485a"/><ellipse cx="9" cy="11" rx="7.500" ry="4.500" transform="rotate(28 9 11)" fill="#5d5d62"/><ellipse cx="8" cy="10" rx="4.500" ry="2.200" transform="rotate(28 8 10)" fill="#a9a9ae"/><path d="M15 15l26 16 2 3-3 .5z" fill="#5f5f64"/><circle cx="8" cy="64" r="37" fill="#28282b"/><path d="M1 42l28-8 3 20-20 26-10-4L0 60z" fill="#c99766" filter="url(#b6b)"/><path d="M6 46l20-6 2 12-14 18z" fill="#b98a5e" filter="url(#b6b)"/><path d="M33 53l-3 8-16 20-4-2 18-24z" fill="#b8324f"/><circle cx="34" cy="44" r="3.500" fill="#c33a58"/><path d="M0 82c10 0 20-4 28-12 4-4 8-6 10-4l-2 8c-8 10-20 16-36 16z" fill="#e3c486" filter="url(#b6b)"/><path d="M0 40c4 0 8 2 8 4l-8 4z" fill="#dcbc7c"/><path d="M36 46l3-.5 7 42-3 .5z" fill="#5a5a60"/><circle cx="57" cy="71" r="2.800" fill="#c2304a"/><circle cx="60" cy="76" r="2.200" fill="#c2304a"/><circle cx="65" cy="80" r="2.400" fill="#b92c46"/><circle cx="68" cy="87" r="2.400" fill="#c2304a"/><circle cx="30" cy="12" r="1" fill="#555"/><circle cx="52" cy="60" r="1.200" fill="#6a5060"/></svg></div>
<div class="cb abs" style="top:825.0px"></div>
<div class="n abs" style="left:274.500px;top:821.0px">6</div>
<div class="t abs" style="left:319.500px;top:821.0px">帖子标题6</div>
<div class="t abs" style="left:482px;top:821.0px">用户名6</div>
<div class="t abs" style="left:641px;top:821.0px">开放</div>
<svg class="abs" style="left:800.500px;top:826.8px;width:11px;height:10px" viewBox="0 0 11 10"><path d="M8.400 1.500L1.800 5.800l6.600 2.900" fill="none" stroke="#333" stroke-width="1.100"/><circle cx="8.400" cy="1.600" r="1.500" fill="#2e2e2e"/><circle cx="1.900" cy="5.800" r="1.500" fill="#2e2e2e"/><circle cx="8.400" cy="8.600" r="1.500" fill="#2e2e2e"/></svg>
<div class="sw abs" style="top:821.7px"><i></i></div>
<svg class="abs" style="left:885px;top:826.2px;width:12px;height:12px" viewBox="0 0 12 12"><path d="M1 10.100L1.700 7.500 5.700.9 8.300 2.500 4.300 9.100z" fill="none" stroke="#4a4a4a" stroke-width="1.100" stroke-linejoin="round"/><path d="M4.800 2.500l2.600 1.600M5.300 11.200h5.600" stroke="#4a4a4a" stroke-width="1.100"/></svg>
<div class="n abs" style="left:957.500px;top:821.0px">2025-04-19 00:53:05</div>
<div class="t abs" style="left:1116px;top:821.0px">分类名称6</div>
<div class="t abs" style="left:1454px;top:821.0px">否</div>
<div class="b abs" style="left:1613px;top:815.0px;width:45px">查看</div>
<div class="b abs" style="left:1662px;top:815.0px;width:46px">修改</div>
<div class="b abs" style="left:1712px;top:815.0px;width:71px">查看评论</div>
<div class="b abs" style="left:1787px;top:815.0px;width:45px">删除</div>
<div class="row abs" style="top:883.55px;height:104.80px;background:#ebebeb;border-bottom:1px solid #efefec"></div>
<div class="img abs" style="top:888.05px"><svg viewBox="0 0 90 90"><defs><linearGradient id="g7" x1="0" y1="0" x2="1" y2="0"><stop offset="0" stop-color="#3a2f92"/><stop offset=".3" stop-color="#4a3596"/><stop offset=".55" stop-color="#3a1f5e"/><stop offset=".8" stop-color="#8a2450"/><stop offset="1" stop-color="#b52a4a"/></linearGradient><filter id="b7a" x="-20%" y="-20%" width="140%" height="140%"><feGaussianBlur stdDeviation="1.500"/></filter></defs><rect width="90" height="90" fill="url(#g7)"/><path d="M0 0h90v6H0z" fill="#2a1f5c" opacity=".6"/><path d="M2 12h8v14H2zM14 10h10v16H14z" fill="#6b5ab0" filter="url(#b7a)"/><path d="M24 12h8v14h-8z" fill="#b9c4ea" filter="url(#b7a)"/><path d="M44 16h12v10H44z" fill="#7a4a8a" filter="url(#b7a)"/><path d="M70 9h9v17h-9z" fill="#6a2a3a" filter="url(#b7a)"/><path d="M80 6h10v20H80z" fill="#e0405a" filter="url(#b7a)"/></svg></div>
<div class="abs" style="left:860px;top:432px;width:184px;height:46.500px;background:#4ea2e2"></div>
<div class="abs" style="left:995.800px;top:432.800px;width:46.700px;height:44.500px;background:#fdfefe;border-radius:2px"></div>
<div class="abs" style="left:866px;top:438.500px;height:18px;line-height:18px;font-size:14px;font-weight:bold;color:#fff;white-space:nowrap;letter-spacing:1.100px">无须担心.自动发货</div>
<div class="abs" style="left:864px;top:459.300px;height:18px;line-height:18px;font-size:13px;font-weight:bold;color:#fff;white-space:nowrap;text-decoration:underline;letter-spacing:-.03px">www.51topmind.com</div>
<div class="abs" style="left:1002.500px;top:436px;height:19px;line-height:19px;font-size:15.500px;color:#4a8fd2;white-space:nowrap">毕业</div>
<div class="abs" style="left:1002.500px;top:455.500px;height:19px;line-height:19px;font-size:15.500px;color:#4a8fd2;white-space:nowrap">设计</div>
</body></html>
